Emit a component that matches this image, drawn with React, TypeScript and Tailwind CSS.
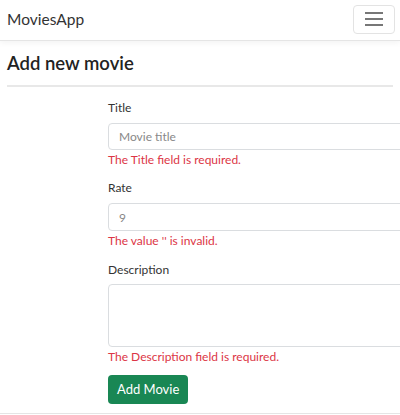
export default function App() {
  return (
    <div className="w-[400px] h-[415px] overflow-hidden bg-white text-[#212529] font-['Lato',sans-serif]">
      <nav className="h-[41px] flex items-center justify-between pl-[7px] pr-[5px] border-b border-[#e5e5e5] shadow-[0_2px_6px_rgba(0,0,0,0.05)]">
        <span className="text-[15.5px] text-[#333]">MoviesApp</span>
        <button className="w-[42px] h-[29px] mb-[2px] border border-[#e3e3e3] rounded-[4px] flex items-center justify-center">
          <svg width="20" height="16" viewBox="0 0 20 16">
            <path d="M1 2h18M1 8h18M1 14h18" stroke="#777" strokeWidth="2" />
          </svg>
        </button>
      </nav>

      <div className="px-[7px]">
        <h1 className="mt-[10px] text-[18.5px] font-semibold text-[#222] leading-[24px]">Add new movie</h1>
        <hr className="mt-[10px] border-t-2 border-[#e8e8e8]" />

        <form className="ml-[101px] w-[320px] mt-[12px] text-[12px]">
          <div className="mb-[11px]">
            <label className="block text-[#333] leading-[18px] mb-[6px]">Title</label>
            <input
              placeholder="Movie title"
              className="w-full h-[27px] px-[10px] border border-[#dadde0] rounded-[4px] placeholder:text-[#888] outline-none"
            />
            <div className="text-[#dc3545] leading-[17px] mt-[1px]">The Title field is required.</div>
          </div>

          <div className="mb-[12px]">
            <label className="block text-[#333] leading-[18px] mb-[6px]">Rate</label>
            <input
              placeholder="9"
              className="w-full h-[28px] px-[10px] border border-[#dadde0] rounded-[4px] placeholder:text-[#888] outline-none"
            />
            <div className="text-[#dc3545] leading-[17px] mt-[1px]">The value '' is invalid.</div>
          </div>

          <div className="mb-[10px]">
            <label className="block text-[#333] leading-[18px] mb-[5px]">Description</label>
            <textarea className="block w-full h-[63px] px-[10px] border border-[#dadde0] rounded-[4px] outline-none resize-none" />
            <div className="text-[#dc3545] leading-[17px] mt-[1px]">The Description field is required.</div>
          </div>

          <button
            type="button"
            className="h-[29px] px-[9px] rounded-[4px] bg-[#198754] text-white text-[13px]"
          >
            Add Movie
          </button>
        </form>
      </div>
      <div className="mt-[9px] border-t border-[#e5e5e5]" />
    </div>
  );
}
